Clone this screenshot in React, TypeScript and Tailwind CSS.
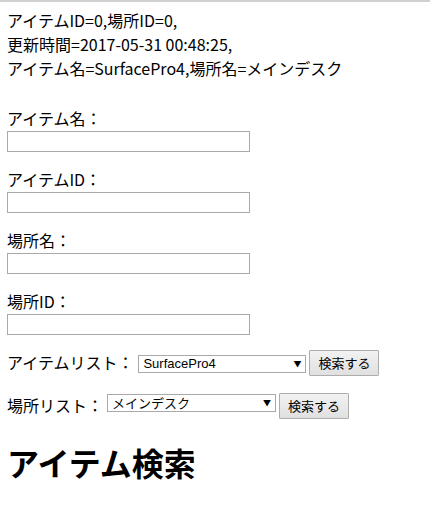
import React from "react";

const jp = { fontFamily: '"Noto Sans CJK JP", sans-serif' };

function Field({ label }: { label: string }) {
  return (
    <div className="mb-[15px]">
      <div className="h-[24px] leading-[24px] text-[16px]">{label}</div>
      <input
        type="text"
        className="mt-[1px] block h-[21px] w-[243px] border border-[#a9a9a9] bg-white outline-none"
      />
    </div>
  );
}

function Select({ value, w, latin }: { value: string; w: string; latin?: boolean }) {
  return (
    <div className={`relative h-[18px] ${w} border border-[#a9a9a9] bg-white`}>
      <div
        className={`h-full pl-[4px] text-[13px] leading-[16px] text-black ${latin ? "font-['Liberation_Sans',Arial,sans-serif]" : ""}`}
      >
        {value}
      </div>
      <span className="absolute right-[4px] top-[4px] text-[8px] leading-[8px] text-black">▼</span>
    </div>
  );
}

function Button() {
  return (
    <div className="flex h-[26px] items-center justify-center border border-[#adadad] bg-gradient-to-b from-[#f2f2f2] to-[#e0e0e0] text-[13px] leading-[16px] text-black w-[70px] rounded-[1px]">
      検索する
    </div>
  );
}

export default function App() {
  return (
    <div className="min-h-[506px] w-[430px] border-t-2 border-[#d0d0d0] bg-white text-black" style={jp}>
      <div className="pl-[7px] pt-[6px]">
        <div className="text-[16px] leading-[24px]">
          <div>アイテムID=0,場所ID=0,</div>
          <div>更新時間=2017-05-31 00:48:25,</div>
          <div>アイテム名=SurfacePro4,場所名=メインデスク</div>
        </div>
        <div className="mt-[26px]">
          <Field label="アイテム名：" />
          <Field label="アイテムID：" />
          <Field label="場所名：" />
          <Field label="場所ID：" />
        </div>
        <div className="flex items-start">
          <div className="h-[24px] text-[16px] leading-[24px]">アイテムリスト：</div>
          <div className="ml-[5px] mt-[5px]">
            <Select value="SurfacePro4" w="w-[168px]" latin />
          </div>
          <div className="ml-[3px]">
            <Button />
          </div>
        </div>
        <div className="mt-[17px] flex items-start">
          <div className="h-[24px] text-[16px] leading-[24px]">場所リスト：</div>
          <div className="ml-[4px] mt-[1px]">
            <Select value="メインデスク" w="w-[169px]" />
          </div>
          <div className="ml-[3px]">
            <Button />
          </div>
        </div>
        <h1 className="mt-[23px] text-[32px] font-bold leading-[40px]">アイテム検索</h1>
      </div>
    </div>
  );
}
